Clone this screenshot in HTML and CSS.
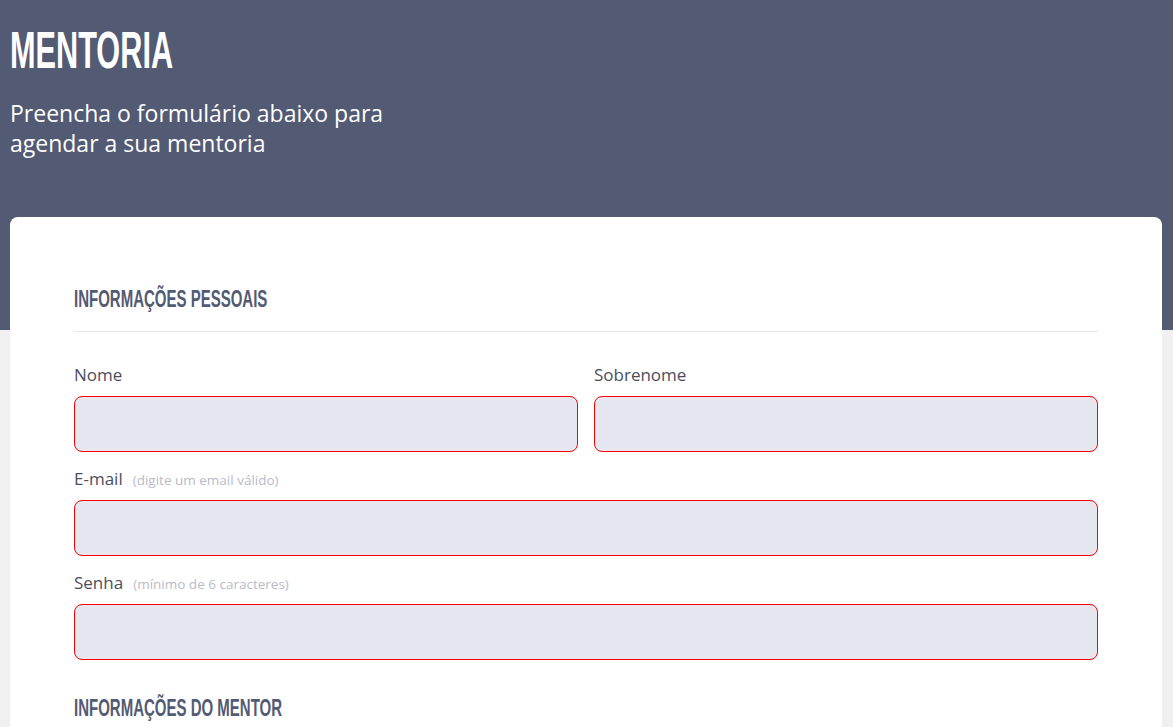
FILE: index.html
```html
<!DOCTYPE html>
<html lang="pt-BR">
<head>
<meta charset="utf-8">
<title>Mentoria</title>
<link rel="stylesheet" href="styles.css">
</head>
<body>
<header class="hero">
  <h1 class="hero-title">MENTORIA</h1>
  <p class="hero-sub">Preencha o formulário abaixo para<br>agendar a sua mentoria</p>
</header>
<main class="card">
  <section class="section">
    <h2 class="section-title">INFORMAÇÕES PESSOAIS</h2>
    <div class="fields">
      <div class="row">
        <div class="field">
          <label class="label">Nome</label>
          <div class="input"></div>
        </div>
        <div class="field">
          <label class="label">Sobrenome</label>
          <div class="input"></div>
        </div>
      </div>
      <div class="field">
        <label class="label"><span>E-mail</span><span class="hint">(digite um email válido)</span></label>
        <div class="input"></div>
      </div>
      <div class="field">
        <label class="label"><span>Senha</span><span class="hint">(mínimo de 6 caracteres)</span></label>
        <div class="input"></div>
      </div>
    </div>
  </section>
  <section class="section second">
    <h2 class="section-title">INFORMAÇÕES DO MENTOR</h2>
  </section>
</main>
</body>
</html>
```
FILE: styles.css
```css
* { box-sizing: border-box; }
html, body { margin: 0; padding: 0; }
body {
  background: linear-gradient(to bottom, #535a73 0, #535a73 330px, #f0f0f0 330px);
  font-family: "Open Sans", "Noto Sans", sans-serif;
  min-height: 727px;
}
.hero {
  padding: 24px 10px 0 10px;
  height: 217px;
}
.hero-title {
  margin: 0;
  font-family: "Liberation Sans Narrow", "Liberation Sans", sans-serif;
  font-weight: 700;
  font-size: 52px;
  line-height: 52px;
  color: #ffffff;
  display: inline-block;
  transform: scaleX(0.59);
  transform-origin: left center;
}
.hero-sub {
  margin: 22px 0 0 0;
  font-size: 23px;
  line-height: 30px;
  color: #ffffff;
  font-weight: 400;
}
.card {
  margin: 0 11px 0 10px;
  background: #ffffff;
  border-radius: 8px 8px 0 0;
  padding: 70px 64px 40px 64px;
}
.section {
  display: flex;
  flex-direction: column;
  align-items: flex-start;
}
.section-title {
  margin: 0;
  font-family: "Liberation Sans Narrow", "Liberation Sans", sans-serif;
  font-weight: 700;
  font-size: 24px;
  line-height: 24px;
  color: #535a73;
  transform: scaleX(0.625);
  transform-origin: left center;
  white-space: nowrap;
}
.section:first-child .section-title {
  margin-bottom: 20px;
}
.fields {
  align-self: stretch;
  border-top: 1px solid #e6e6e6;
  padding-top: 32px;
  display: flex;
  flex-direction: column;
  gap: 16px;
}
.row {
  display: grid;
  grid-template-columns: 1fr 1fr;
  gap: 16px;
}
.field {
  display: flex;
  flex-direction: column;
  gap: 10px;
}
.label {
  display: flex;
  align-items: baseline;
  gap: 10px;
  height: 22px;
  font-size: 17px;
  line-height: 22px;
  color: #4b4e5c;
}
.hint {
  font-size: 13.5px;
  color: #b9bac8;
}
.input {
  height: 56px;
  background: #e5e6ef;
  border: 1px solid #ff0000;
  border-radius: 8px;
}
.second {
  margin-top: 36px;
}
```
